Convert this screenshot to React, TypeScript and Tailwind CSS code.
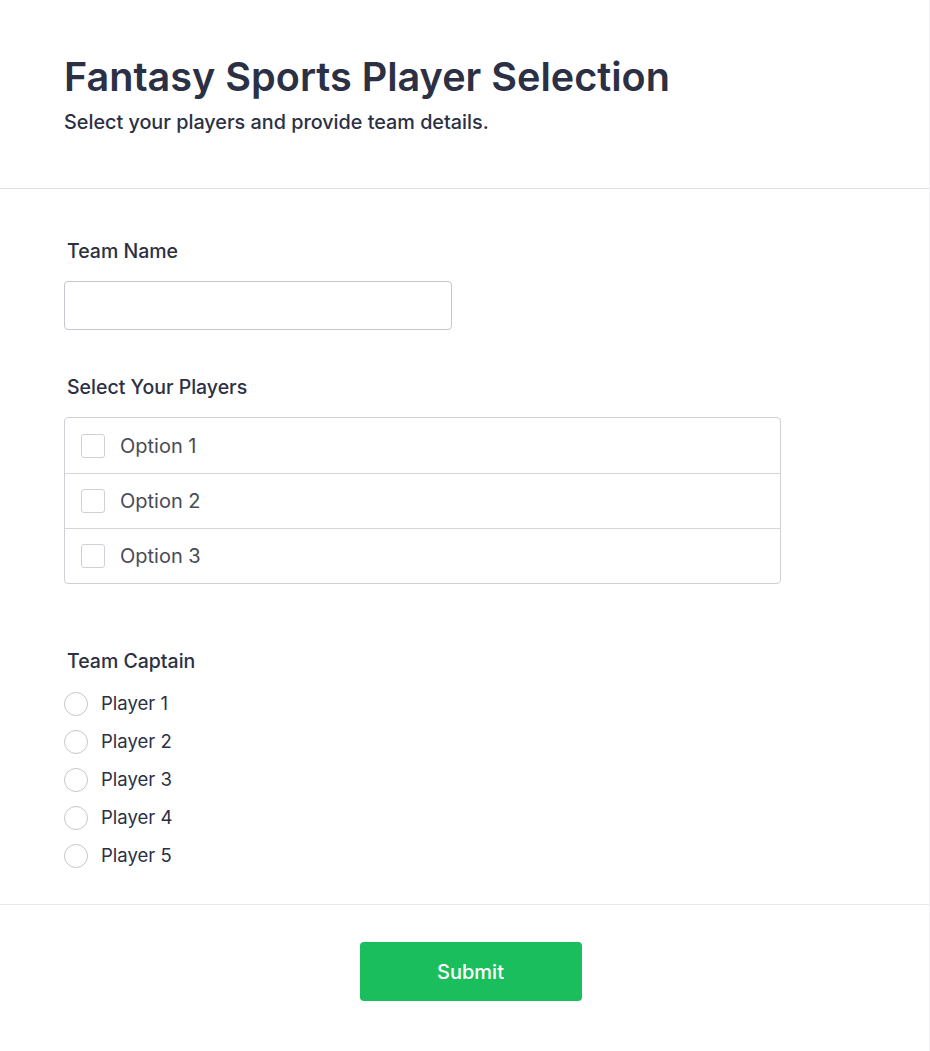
import { useState } from "react";

const players = ["Player 1", "Player 2", "Player 3", "Player 4", "Player 5"];
const options = ["Option 1", "Option 2", "Option 3"];

export default function App() {
  const [teamName, setTeamName] = useState("");
  const [picked, setPicked] = useState<string[]>([]);
  const [captain, setCaptain] = useState("");

  const toggle = (o: string) =>
    setPicked((p) => (p.includes(o) ? p.filter((x) => x !== o) : [...p, o]));

  return (
    <div
      className="min-h-[1051px] w-full bg-white border-r border-[#f0f0f5] text-[#2b3044]"
      style={{ fontFamily: "Inter, 'Noto Sans', sans-serif" }}
    >
      <header className="px-16 pt-[53px] h-[189px] border-b border-[#dcdce8]">
        <h1 className="text-[39.6px] leading-[48px] font-semibold">
          Fantasy Sports Player Selection
        </h1>
        <p className="mt-[7px] text-[19.8px] leading-[28px] font-medium">
          Select your players and provide team details.
        </p>
      </header>

      <form className="px-16 pt-12 pb-9 border-b border-[#e8e8ef]">
        <label className="block ml-[3px] text-[19.5px] leading-[28px] font-medium">Team Name</label>
        <input
          value={teamName}
          onChange={(e) => setTeamName(e.target.value)}
          className="mt-4 block w-[388px] h-[49px] rounded-[4px] border border-[#c4c6d0] px-3 text-[18px] outline-none"
        />

        <label className="block mt-[43px] ml-[3px] text-[19.5px] leading-[28px] font-medium">
          Select Your Players
        </label>
        <div className="mt-4 w-[717px] rounded-[4px] border border-[#cfd0d6]">
          {options.map((o, i) => (
            <label
              key={o}
              className={`flex items-center h-[55px] px-4 gap-[15px] cursor-pointer ${
                i > 0 ? "border-t border-[#d6d7dc]" : ""
              }`}
            >
              <input
                type="checkbox"
                checked={picked.includes(o)}
                onChange={() => toggle(o)}
                className="appearance-none w-6 h-6 rounded-[3px] border border-[#cfd1d8] checked:bg-[#1abe5c]"
              />
              <span className="text-[20px] text-[#4a4b55]">{o}</span>
            </label>
          ))}
        </div>

        <label className="block mt-[63px] ml-[3px] text-[19.5px] leading-[28px] font-medium">Team Captain</label>
        <div className="mt-[17px] flex flex-col gap-[14px]">
          {players.map((p) => (
            <label key={p} className="flex items-center h-6 gap-[13px] cursor-pointer">
              <input
                type="radio"
                name="captain"
                checked={captain === p}
                onChange={() => setCaptain(p)}
                className="appearance-none w-6 h-6 rounded-full border border-[#c5c7cf] checked:border-[7px] checked:border-[#1abe5c]"
              />
              <span className="text-[18.5px]">{p}</span>
            </label>
          ))}
        </div>
      </form>

      <div className="flex justify-center pl-3 pt-[37px] pb-[50px]">
        <button className="w-[222px] h-[59px] rounded-[4px] bg-[#1abe5c] text-white text-[20px] font-medium">
          Submit
        </button>
      </div>
    </div>
  );
}
